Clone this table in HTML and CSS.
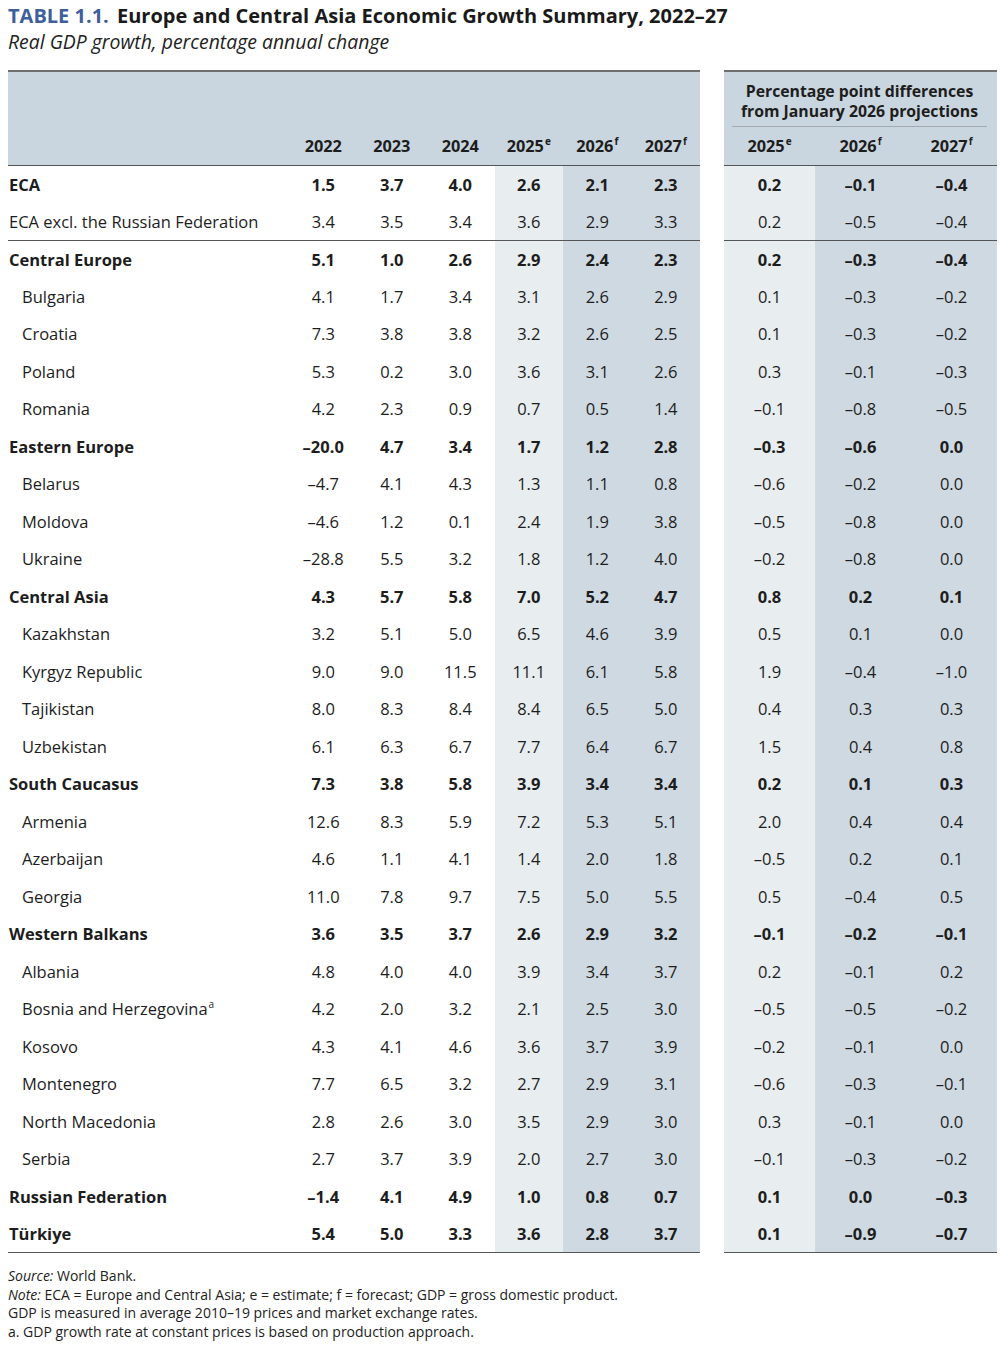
FILE: index.html
```html
<!DOCTYPE html>
<html>
<head>
<meta charset="utf-8">
<link rel="stylesheet" href="styles.css">
</head>
<body>
<div class="page">
  <h1 class="title"><span class="tnum">TABLE 1.1.</span> Europe and Central Asia Economic Growth Summary, 2022–27</h1>
  <p class="subtitle">Real GDP growth, percentage annual change</p>
  <div class="tables">
    <table class="main">
      <colgroup>
        <col class="c-label"><col class="c-num"><col class="c-num"><col class="c-num"><col class="c-num e"><col class="c-num f"><col class="c-num f">
      </colgroup>
      <thead>
        <tr class="h1"><th colspan="7"></th></tr>
        <tr class="h2">
          <th></th><th>2022</th><th>2023</th><th>2024</th><th class="e">2025<sup>e</sup></th><th class="f">2026<sup>f</sup></th><th class="f">2027<sup>f</sup></th>
        </tr>
      </thead>
      <tbody id="mainbody"></tbody>
    </table>
    <table class="diff">
      <colgroup><col class="e"><col class="f"><col class="f"></colgroup>
      <thead>
        <tr class="h1"><th colspan="3"><div class="dhead">Percentage point differences<br>from January 2026 projections</div></th></tr>
        <tr class="h2"><th class="e">2025<sup>e</sup></th><th class="f">2026<sup>f</sup></th><th class="f">2027<sup>f</sup></th></tr>
      </thead>
      <tbody id="diffbody"></tbody>
    </table>
  </div>
  <div class="notes">
    <p><i>Source:</i> World Bank.</p>
    <p><i>Note:</i> ECA = Europe and Central Asia; e = estimate; f = forecast; GDP = gross domestic product.</p>
    <p>GDP is measured in average 2010–19 prices and market exchange rates.</p>
    <p>a. GDP growth rate at constant prices is based on production approach.</p>
  </div>
</div>
<script src="app.js"></script>
</body>
</html>
```
FILE: app.js
```js
const rows = [
  ["ECA", 1, "1.5","3.7","4.0","2.6","2.1","2.3","0.2","–0.1","–0.4"],
  ["ECA excl. the Russian Federation", 0, "3.4","3.5","3.4","3.6","2.9","3.3","0.2","–0.5","–0.4", "sep"],
  ["Central Europe", 1, "5.1","1.0","2.6","2.9","2.4","2.3","0.2","–0.3","–0.4"],
  ["Bulgaria", 2, "4.1","1.7","3.4","3.1","2.6","2.9","0.1","–0.3","–0.2"],
  ["Croatia", 2, "7.3","3.8","3.8","3.2","2.6","2.5","0.1","–0.3","–0.2"],
  ["Poland", 2, "5.3","0.2","3.0","3.6","3.1","2.6","0.3","–0.1","–0.3"],
  ["Romania", 2, "4.2","2.3","0.9","0.7","0.5","1.4","–0.1","–0.8","–0.5"],
  ["Eastern Europe", 1, "–20.0","4.7","3.4","1.7","1.2","2.8","–0.3","–0.6","0.0"],
  ["Belarus", 2, "–4.7","4.1","4.3","1.3","1.1","0.8","–0.6","–0.2","0.0"],
  ["Moldova", 2, "–4.6","1.2","0.1","2.4","1.9","3.8","–0.5","–0.8","0.0"],
  ["Ukraine", 2, "–28.8","5.5","3.2","1.8","1.2","4.0","–0.2","–0.8","0.0"],
  ["Central Asia", 1, "4.3","5.7","5.8","7.0","5.2","4.7","0.8","0.2","0.1"],
  ["Kazakhstan", 2, "3.2","5.1","5.0","6.5","4.6","3.9","0.5","0.1","0.0"],
  ["Kyrgyz Republic", 2, "9.0","9.0","11.5","11.1","6.1","5.8","1.9","–0.4","–1.0"],
  ["Tajikistan", 2, "8.0","8.3","8.4","8.4","6.5","5.0","0.4","0.3","0.3"],
  ["Uzbekistan", 2, "6.1","6.3","6.7","7.7","6.4","6.7","1.5","0.4","0.8"],
  ["South Caucasus", 1, "7.3","3.8","5.8","3.9","3.4","3.4","0.2","0.1","0.3"],
  ["Armenia", 2, "12.6","8.3","5.9","7.2","5.3","5.1","2.0","0.4","0.4"],
  ["Azerbaijan", 2, "4.6","1.1","4.1","1.4","2.0","1.8","–0.5","0.2","0.1"],
  ["Georgia", 2, "11.0","7.8","9.7","7.5","5.0","5.5","0.5","–0.4","0.5"],
  ["Western Balkans", 1, "3.6","3.5","3.7","2.6","2.9","3.2","–0.1","–0.2","–0.1"],
  ["Albania", 2, "4.8","4.0","4.0","3.9","3.4","3.7","0.2","–0.1","0.2"],
  ["Bosnia and Herzegovina<sup>a</sup>", 2, "4.2","2.0","3.2","2.1","2.5","3.0","–0.5","–0.5","–0.2"],
  ["Kosovo", 2, "4.3","4.1","4.6","3.6","3.7","3.9","–0.2","–0.1","0.0"],
  ["Montenegro", 2, "7.7","6.5","3.2","2.7","2.9","3.1","–0.6","–0.3","–0.1"],
  ["North Macedonia", 2, "2.8","2.6","3.0","3.5","2.9","3.0","0.3","–0.1","0.0"],
  ["Serbia", 2, "2.7","3.7","3.9","2.0","2.7","3.0","–0.1","–0.3","–0.2"],
  ["Russian Federation", 1, "–1.4","4.1","4.9","1.0","0.8","0.7","0.1","0.0","–0.3"],
  ["Türkiye", 1, "5.4","5.0","3.3","3.6","2.8","3.7","0.1","–0.9","–0.7"]
];
const mb = document.getElementById("mainbody");
const db = document.getElementById("diffbody");
const cls = ["", "", "", "e", "f", "f"];
const dcls = ["e", "f", "f"];
rows.forEach(r => {
  const type = r[1] === 1 ? "bold" : (r[1] === 2 ? "sub" : "plain");
  const extra = r[11] === "sep" ? " sep" : "";
  let h = `<tr class="${type}${extra}"><td class="label">${r[0]}</td>`;
  for (let i = 0; i < 6; i++) h += `<td class="num ${cls[i]}">${r[2 + i]}</td>`;
  mb.insertAdjacentHTML("beforeend", h + "</tr>");
  let d = `<tr class="${type}${extra}">`;
  for (let i = 0; i < 3; i++) d += `<td class="num ${dcls[i]}">${r[8 + i]}</td>`;
  db.insertAdjacentHTML("beforeend", d + "</tr>");
});
```
FILE: styles.css
```css
* { box-sizing: border-box; }
html, body { margin: 0; padding: 0; background: #fff; }
body {
  font-family: "Open Sans", Lato, "Noto Sans", sans-serif;
  color: #1d1d1d;
}
.page { padding: 3px 8px 0 8px; width: 1008px; }
.title {
  margin: 0;
  font-size: 20px;
  line-height: 26px;
  font-weight: 700;
  color: #1a1a1a;
}
.tnum { color: #3f5f9c; margin-right: 3px; }
.subtitle {
  margin: 0;
  font-style: italic;
  font-size: 19.4px;
  line-height: 25px;
  color: #222;
}
.tables {
  display: flex;
  gap: 24px;
  margin-top: 16px;
}
table {
  border-collapse: collapse;
  table-layout: fixed;
}
table.main { width: 692px; }
table.diff { width: 273px; }
col.c-label { width: 281px; }
col.c-num { width: 68.5px; }
thead tr.h1 th {
  height: 56px;
  padding: 0;
  background: #cad6df;
  border-top: 2px solid #6e6e6e;
  vertical-align: top;
}
thead tr.h2 th {
  height: 38px;
  padding: 1px 0 0 0;
  background: #cad6df;
  font-size: 16.3px;
  font-weight: 700;
  text-align: center;
  border-bottom: 1.5px solid #555;
}
sup {
  font-size: 10px;
  line-height: 0;
  vertical-align: 7px;
  margin-left: 1px;
}
.dhead {
  margin: 0 10px 0 8px;
  padding-top: 9px;
  height: 55px;
  border-bottom: 1.5px solid #a3a9ae;
  font-size: 15.8px;
  line-height: 20px;
  font-weight: 700;
  text-align: center;
  color: #1d1d1d;
}
tbody td {
  height: 37.5px;
  padding: 0;
  font-size: 16.5px;
  vertical-align: middle;
}
tbody td.num { text-align: center; }
tbody td.e { background: #e8edf0; }
tbody td.f { background: #cfd9e1; }
tbody td.label { padding-left: 1px; }
tbody tr.sub td.label { padding-left: 14px; }
tbody tr.bold td { font-weight: 700; }
tbody tr.sep td { border-bottom: 1.5px solid #555; }
tbody tr:last-child td { border-bottom: 1.5px solid #555; }
.notes {
  margin-top: 14px;
  font-size: 14px;
  line-height: 18.7px;
  color: #222;
}
.notes p { margin: 0; }
```
